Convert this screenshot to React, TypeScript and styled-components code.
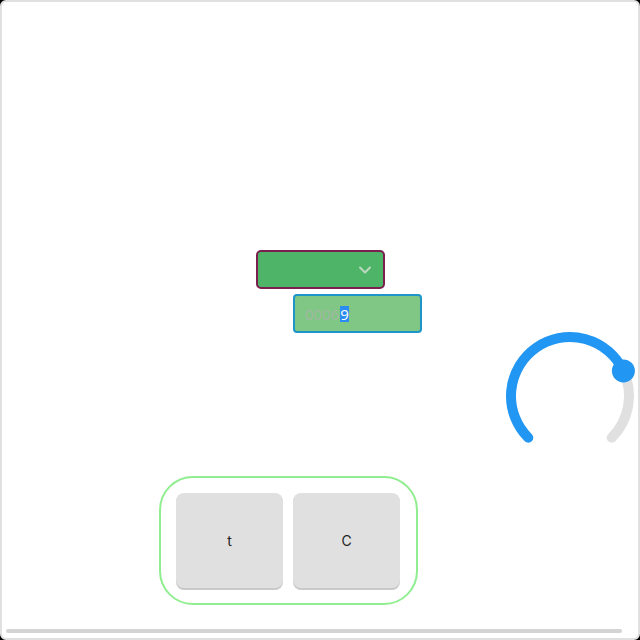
import styled, { createGlobalStyle } from "styled-components";

const GlobalStyle = createGlobalStyle`
  html, body {
    margin: 0;
    padding: 0;
    background: #000;
  }
  * {
    box-sizing: border-box;
  }
`;

const Frame = styled.div`
  width: 640px;
  height: 640px;
  background: #fff;
  border: 2px solid #e0e0e0;
  border-radius: 6px;
  display: flex;
  flex-direction: column;
  overflow: hidden;
  font-family: "Inter", "Open Sans", sans-serif;
`;

const Row = styled.div<{ $top: number; $left?: number; $end?: boolean }>`
  display: flex;
  justify-content: ${({ $end }) => ($end ? "flex-end" : "flex-start")};
  margin-top: ${({ $top }) => $top}px;
  padding-left: ${({ $left }) => $left ?? 0}px;
  padding-right: ${({ $end }) => ($end ? 2 : 0)}px;
`;

const SelectBox = styled.div`
  width: 129px;
  height: 39px;
  background: #4db468;
  border: 2px solid #7a1f4e;
  border-radius: 5px;
  display: flex;
  align-items: center;
  justify-content: flex-end;
  padding-right: 11px;
  padding-top: 1px;
  color: #bcd9c0;
`;

const InputBox = styled.div`
  width: 129px;
  height: 39px;
  background: #80c684;
  border: 2px solid #1e95c8;
  border-radius: 4px;
  display: flex;
  align-items: center;
  padding-left: 10px;
  font-family: "Open Sans", sans-serif;
  font-size: 15px;
  line-height: 16px;
`;

const Faded = styled.span`
  color: #a2b8a3;
`;

const Selected = styled.span`
  background: #2a8cf0;
  color: #fff;
  margin-left: 1px;
`;

const KnobSvg = styled.svg`
  overflow: visible;
  display: block;
`;

const Group = styled.div`
  width: 259px;
  height: 129px;
  border: 2px solid #90ee90;
  border-radius: 34px;
  padding: 15px;
  display: flex;
  gap: 10px;
`;

const Key = styled.button`
  width: 107px;
  height: 95px;
  border: none;
  border-radius: 8px;
  background: #e0e0e0;
  box-shadow: 0 2px 0 #c9c9c9;
  font-family: "Inter", "Open Sans", sans-serif;
  font-size: 14px;
  color: #222;
  display: flex;
  align-items: center;
  justify-content: center;
  padding: 0;
`;

const ScrollTrack = styled.div`
  margin-top: 24px;
  margin-left: 4px;
  width: 616px;
  height: 4px;
  border-radius: 2px;
  background: #d4d4d4;
`;

function Knob({ value }: { value: number }) {
  const cx = 70;
  const cy = 63;
  const r = 59;
  const start = -135;
  const sweep = 270;
  const point = (deg: number) => {
    const a = ((deg - 90) * Math.PI) / 180;
    return [cx + r * Math.cos(a), cy + r * Math.sin(a)];
  };
  const end = start + sweep * value;
  const [sx, sy] = point(start);
  const [ex, ey] = point(end);
  const [fx, fy] = point(start + sweep);
  const bigValue = sweep * value > 180 ? 1 : 0;
  const bigRest = sweep * (1 - value) > 180 ? 1 : 0;
  return (
    <KnobSvg width={136} height={113} viewBox="0 0 136 113">
      <path
        d={`M${ex} ${ey} A${r} ${r} 0 ${bigRest} 1 ${fx} ${fy}`}
        fill="none"
        stroke="#e0e0e0"
        strokeWidth={10}
        strokeLinecap="round"
      />
      <path
        d={`M${sx} ${sy} A${r} ${r} 0 ${bigValue} 1 ${ex} ${ey}`}
        fill="none"
        stroke="#2196f3"
        strokeWidth={10}
        strokeLinecap="round"
      />
      <circle cx={ex} cy={ey} r={11.5} fill="#2196f3" />
    </KnobSvg>
  );
}

export default function App() {
  return (
    <>
      <GlobalStyle />
      <Frame>
        <Row $top={248} $left={254}>
          <SelectBox>
            <svg width="14" height="8" viewBox="0 0 14 8" fill="none" stroke="currentColor" strokeWidth="2" strokeLinecap="round" strokeLinejoin="round">
              <path d="M2 1.5l5 5 5-5" />
            </svg>
          </SelectBox>
        </Row>
        <Row $top={5} $left={291}>
          <InputBox>
            <Faded>0006</Faded>
            <Selected>9</Selected>
          </InputBox>
        </Row>
        <Row $top={0} $end>
          <Knob value={0.74} />
        </Row>
        <Row $top={30} $left={157}>
          <Group>
            <Key>t</Key>
            <Key>C</Key>
          </Group>
        </Row>
        <ScrollTrack />
      </Frame>
    </>
  );
}
